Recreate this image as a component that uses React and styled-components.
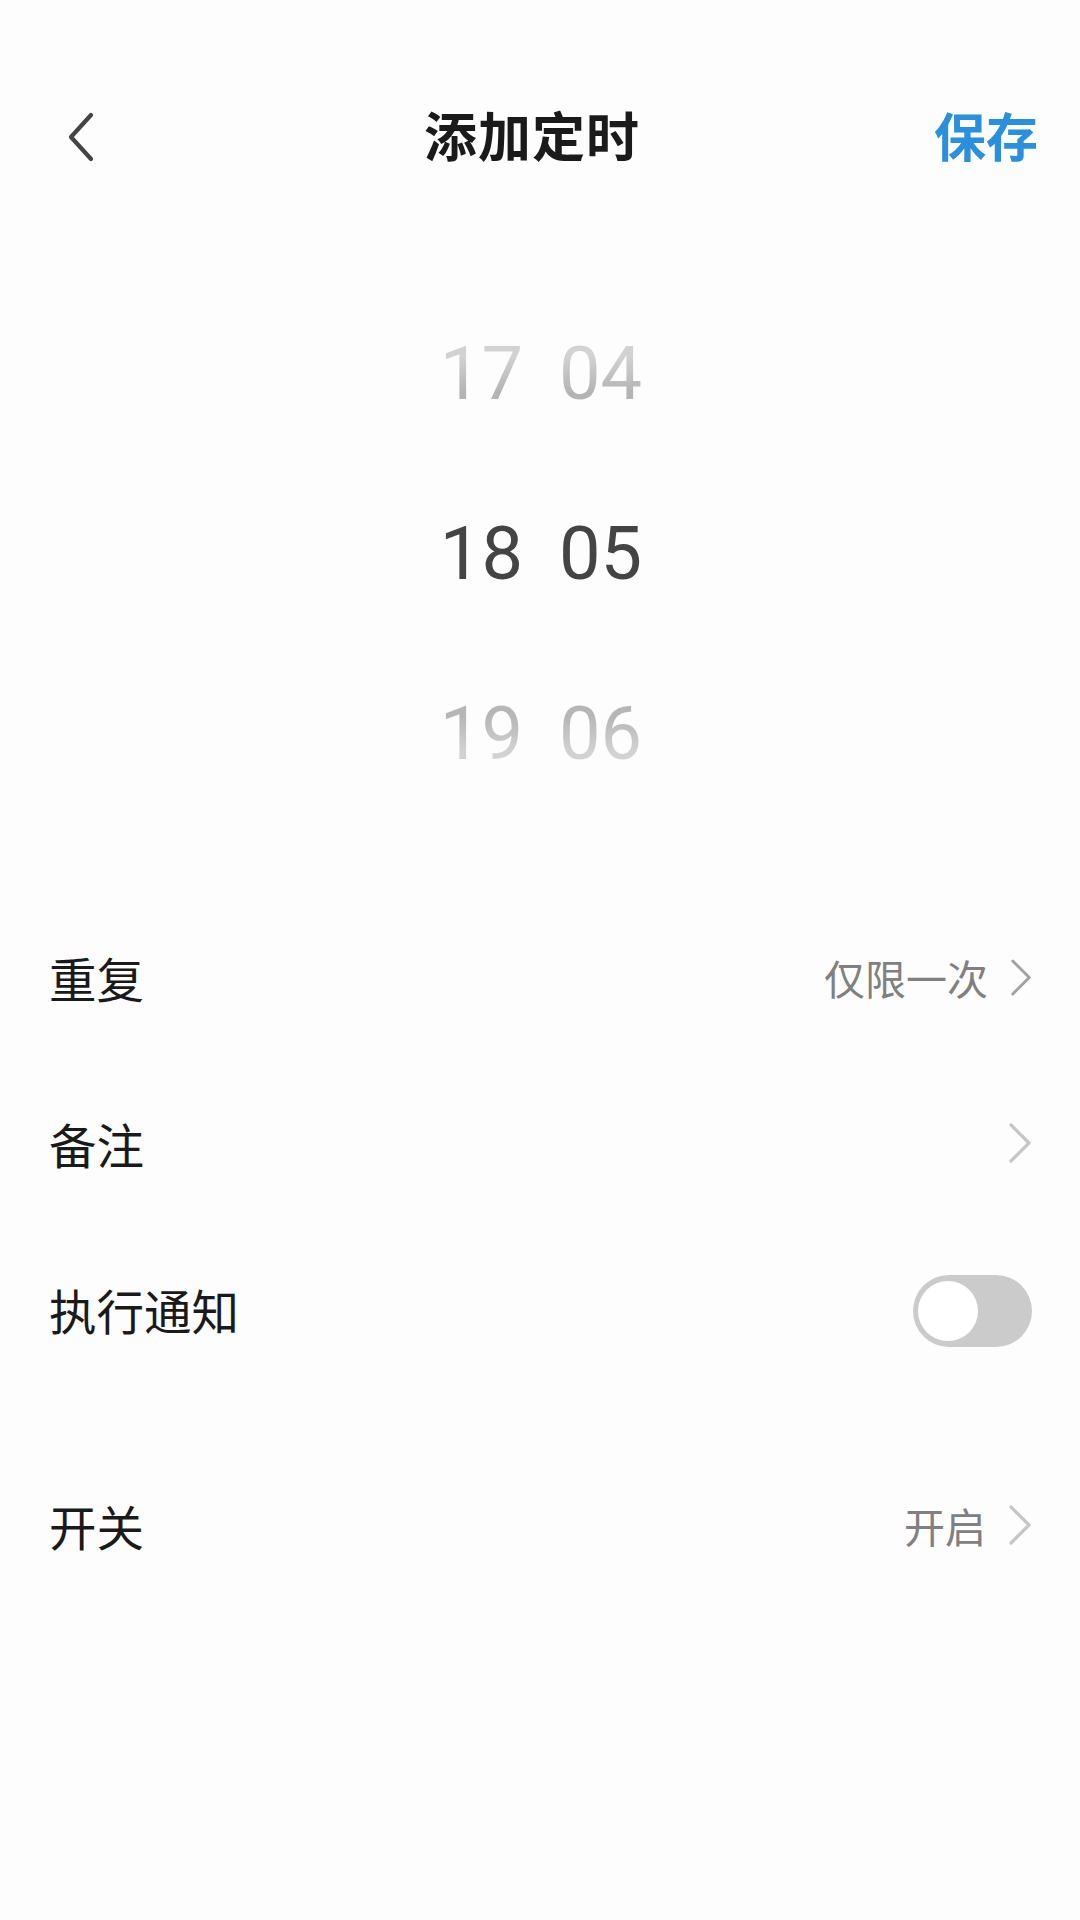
import React from 'react'
import styled, { createGlobalStyle } from 'styled-components'

const GlobalStyle = createGlobalStyle`
  html, body {
    margin: 0;
    padding: 0;
    background: #fdfdfd;
  }
  body {
    font-family: "Noto Sans CJK SC", "Noto Sans", sans-serif;
  }
`

const hours = ['17', '18', '19']
const minutes = ['04', '05', '06']

function BackIcon() {
  return (
    <svg width="30" height="50" viewBox="0 0 30 50">
      <path d="M25 3 L5 25 L25 47" fill="none" stroke="#444" strokeWidth="4.2" strokeLinecap="round" strokeLinejoin="round" />
    </svg>
  )
}

function Chevron({ faint }) {
  return (
    <ChevronSvg faint={faint} viewBox="0 0 24 40">
      <path d="M3 2 L21 20 L3 38" fill="none" strokeWidth="3.2" strokeLinecap="round" strokeLinejoin="round" />
    </ChevronSvg>
  )
}

function Wheel({ values }) {
  return (
    <WheelCol>
      {values.map((v, i) => (
        <Cell key={v} pos={i === 0 ? 'above' : i === 2 ? 'below' : 'current'}>{v}</Cell>
      ))}
    </WheelCol>
  )
}

export default function App() {
  return (
    <Page>
      <GlobalStyle />
      <Header>
        <BackButton><BackIcon /></BackButton>
        <Title>添加定时</Title>
        <SaveButton>保存</SaveButton>
      </Header>

      <Picker>
        <Wheel values={hours} />
        <Wheel values={minutes} />
      </Picker>

      <Group>
        <Row>
          <Label>重复</Label>
          <Trail>
            <Value>仅限一次</Value>
            <Chevron />
          </Trail>
        </Row>
        <Row>
          <Label>备注</Label>
          <Trail>
            <Chevron faint />
          </Trail>
        </Row>
        <Row>
          <Label>执行通知</Label>
          <Toggle />
        </Row>
      </Group>

      <Group gap>
        <Row>
          <Label>开关</Label>
          <Trail>
            <Value>开启</Value>
            <Chevron faint />
          </Trail>
        </Row>
      </Group>
    </Page>
  )
}

const Page = styled.div`
  width: 1080px;
  min-height: 1920px;
  background: #fdfdfd;
  display: flex;
  flex-direction: column;
`

const Header = styled.div`
  display: grid;
  grid-template-columns: 1fr auto 1fr;
  align-items: center;
  height: 100px;
  padding: 84px 42px 0 66px;
`

const BackButton = styled.div`
  display: flex;
  align-items: center;
  justify-self: start;
  margin-top: 5px;
`

const Title = styled.div`
  font-size: 53px;
  font-weight: 700;
  color: #1a1a1a;
  letter-spacing: 1px;
  margin-right: 40px;
`

const SaveButton = styled.div`
  justify-self: end;
  font-size: 52px;
  font-weight: 700;
  color: #2b8fdb;
`

const Picker = styled.div`
  display: flex;
  justify-content: center;
  gap: 36px;
  margin-top: 100px;
  padding-left: 2px;
`

const WheelCol = styled.div`
  display: flex;
  flex-direction: column;
`

const Cell = styled.div`
  height: 180px;
  display: flex;
  align-items: center;
  justify-content: center;
  font-family: Roboto, "Noto Sans", sans-serif;
  font-size: 74px;
  line-height: 1;
  color: #444;
  ${p => p.pos === 'above' && `
    background: linear-gradient(180deg, #d2d2d2 40%, #b4b4b4 60%);
    -webkit-background-clip: text;
    background-clip: text;
    color: transparent;
  `}
  ${p => p.pos === 'below' && `
    background: linear-gradient(180deg, #b6b6b6 40%, #d2d2d2 60%);
    -webkit-background-clip: text;
    background-clip: text;
    color: transparent;
  `}
`

const Group = styled.div`
  display: flex;
  flex-direction: column;
  margin-top: ${p => (p.gap ? '50px' : '70px')};
`

const Row = styled.div`
  height: 166px;
  display: flex;
  align-items: center;
  justify-content: space-between;
  padding: 0 48px 0 49px;
`

const Label = styled.div`
  font-size: 47.5px;
  color: #1a1a1a;
`

const Trail = styled.div`
  display: flex;
  align-items: center;
  gap: 22px;
`

const Value = styled.div`
  font-size: 41px;
  color: #808080;
`

const ChevronSvg = styled.svg`
  width: ${p => (p.faint ? '24px' : '22px')};
  height: ${p => (p.faint ? '42px' : '37px')};
  stroke: ${p => (p.faint ? '#c6c6c6' : '#a2a2a2')};
`

const Toggle = styled.div`
  position: relative;
  width: 119px;
  height: 72px;
  margin-top: 3px;
  border-radius: 36px;
  background: #cbcbcb;

  &::after {
    content: '';
    position: absolute;
    left: 5px;
    top: 6px;
    width: 60px;
    height: 60px;
    border-radius: 50%;
    background: #fff;
  }
`
